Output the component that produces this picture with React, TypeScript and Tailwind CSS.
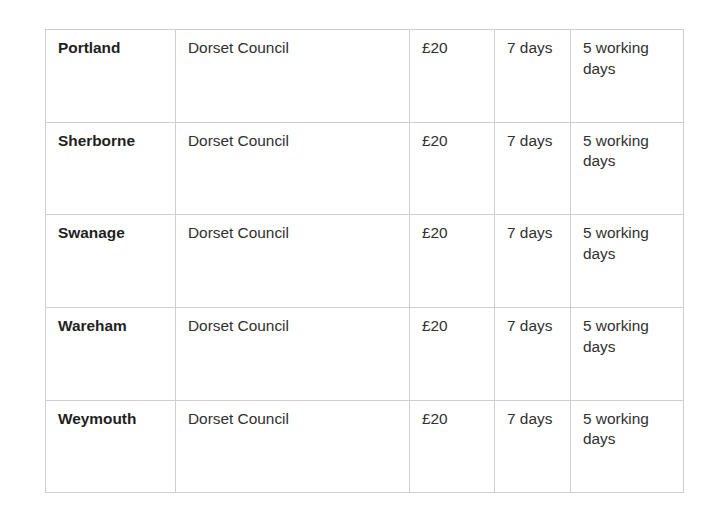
const rows = ["Portland", "Sherborne", "Swanage", "Wareham", "Weymouth"]

export default function App() {
  return (
    <div className="min-h-[508px] bg-white pl-[45px] pt-[29px] font-['Liberation_Sans',Arial,sans-serif] text-[15.4px] leading-[20.5px] text-[#303030]">
      <table className="w-[638px] table-fixed border-collapse">
        <colgroup>
          <col className="w-[130px]" />
          <col className="w-[234px]" />
          <col className="w-[85px]" />
          <col className="w-[76px]" />
          <col className="w-[113px]" />
        </colgroup>
        <tbody>
          {rows.map((town) => (
            <tr key={town} className="h-[92.7px]">
              <td className="border border-[#cfcfcf] px-3 pt-2 align-top font-bold text-[#1f1f1f]">
                {town}
              </td>
              <td className="border border-[#cfcfcf] px-3 pt-2 align-top">Dorset Council</td>
              <td className="border border-[#cfcfcf] px-3 pt-2 align-top">£20</td>
              <td className="border border-[#cfcfcf] px-3 pt-2 align-top">7 days</td>
              <td className="border border-[#cfcfcf] px-3 pt-2 align-top">5 working days</td>
            </tr>
          ))}
        </tbody>
      </table>
    </div>
  )
}
